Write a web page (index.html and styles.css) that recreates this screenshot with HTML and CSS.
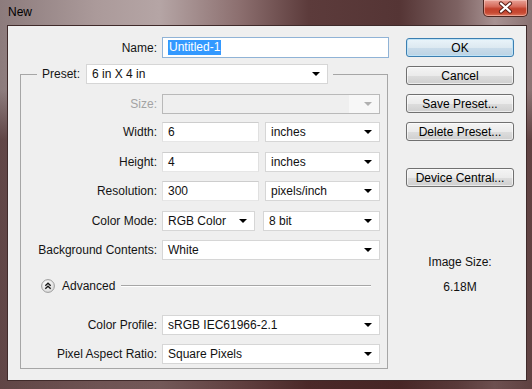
FILE: index.html
```html
<!DOCTYPE html>
<html lang="en">
<head>
  <meta charset="UTF-8" />
  <title>New</title>
  <link rel="stylesheet" href="styles.css">
</head>
<body>
  <div class="window">
    <div class="titlebar">
      <span class="title">New</span>
      <div class="close-btn">
        <svg width="45" height="17" viewBox="0 0 45 17">
          <path d="M18 4.5 L27 12.5 M27 4.5 L18 12.5" stroke="#5a1f16" stroke-width="4.2" stroke-linecap="round"/>
          <path d="M18 4.5 L27 12.5 M27 4.5 L18 12.5" stroke="#ffffff" stroke-width="2.2" stroke-linecap="round"/>
        </svg>
      </div>
    </div>

    <div class="client">
      <div class="main">
        <div class="name-row">
          <label class="lbl">Name:</label>
          <div class="textbox focused"><span class="selected">Untitled-1</span></div>
        </div>

        <fieldset class="group">
          <legend>
            <div class="legend-inner">
              <label class="lbl">Preset:</label>
              <div class="combo preset">6 in X 4 in</div>
            </div>
          </legend>

          <div class="form-grid">
            <label class="lbl disabled">Size:</label>
            <div class="combo disabled"></div>

            <label class="lbl">Width:</label>
            <div class="pair">
              <div class="textbox">6</div>
              <div class="combo">inches</div>
            </div>

            <label class="lbl">Height:</label>
            <div class="pair">
              <div class="textbox">4</div>
              <div class="combo">inches</div>
            </div>

            <label class="lbl">Resolution:</label>
            <div class="pair">
              <div class="textbox">300</div>
              <div class="combo">pixels/inch</div>
            </div>

            <label class="lbl">Color Mode:</label>
            <div class="pair mode">
              <div class="combo">RGB Color</div>
              <div class="combo">8 bit</div>
            </div>

            <label class="lbl">Background Contents:</label>
            <div class="combo">White</div>

            <div class="advanced">
              <svg class="adv-icon" width="14" height="14" viewBox="0 0 14 14">
                <defs>
                  <radialGradient id="advFill" cx="0.4" cy="0.35" r="0.7">
                    <stop offset="0" stop-color="#ffffff"/>
                    <stop offset="1" stop-color="#d8d8d8"/>
                  </radialGradient>
                </defs>
                <circle cx="7" cy="7" r="6.4" fill="url(#advFill)" stroke="#9c9c9c" stroke-width="1"/>
                <polyline points="4.3,6.8 7,4.3 9.7,6.8" fill="none" stroke="#1a1a1a" stroke-width="1.4"/>
                <polyline points="4.3,9.8 7,7.3 9.7,9.8" fill="none" stroke="#1a1a1a" stroke-width="1.4"/>
              </svg>
              <span>Advanced</span>
              <div class="adv-line"></div>
            </div>

            <label class="lbl">Color Profile:</label>
            <div class="combo">sRGB IEC61966-2.1</div>

            <label class="lbl">Pixel Aspect Ratio:</label>
            <div class="combo">Square Pixels</div>
          </div>
        </fieldset>
      </div>

      <div class="side">
        <button class="btn default">OK</button>
        <button class="btn">Cancel</button>
        <button class="btn">Save Preset...</button>
        <button class="btn">Delete Preset...</button>
        <button class="btn central">Device Central...</button>

        <div class="info-label">Image Size:</div>
        <div class="info-value">6.18M</div>
      </div>
    </div>
  </div>
</body>
</html>
```

FILE: styles.css
```css
* {
  box-sizing: border-box;
}

body {
  margin: 0;
  width: 532px;
  height: 389px;
  overflow: hidden;
  font-family: "Liberation Sans", Arial, sans-serif;
  font-size: 12px;
  color: #111;
  background:
    linear-gradient(180deg, rgba(0,0,0,0) 0px, rgba(0,0,0,0) 90px, rgba(60,25,25,0.55) 140px, rgba(60,25,25,0.55) 100%),
    linear-gradient(90deg, #8c7b7c 0%, #ab9a9a 18%, #b5a5a5 30%, #8c6f6f 45%, #5c3b3b 58%, #553535 75%, #7d6262 86%, #a89292 93%, #8a7272 100%);
}

.window {
  height: 389px;
  display: flex;
  flex-direction: column;
  padding: 0 5px 8px 7px;
}

/* title bar */
.titlebar {
  height: 25px;
  display: flex;
  align-items: flex-start;
}

.title {
  padding: 5px 0 0 1px;
  font-size: 12px;
  color: #000;
}

.close-btn {
  margin-left: auto;
  margin-right: -1px;
  width: 45px;
  height: 17px;
  border: 1px solid #4d2620;
  border-top: none;
  border-radius: 0 0 5px 5px;
  background: linear-gradient(180deg, #e9a398 0%, #d66c5c 40%, #c2412c 55%, #c84a33 80%, #e07a62 100%);
  box-shadow: inset 0 0 0 1px rgba(255, 220, 210, 0.45);
  overflow: hidden;
}

.close-btn svg {
  display: block;
  margin-top: -1px;
  margin-left: -1px;
}

/* client area */
.client {
  flex: 1;
  display: flex;
  gap: 17px;
  padding: 11px 11px 0 12px;
  background: #efefef;
  border: 1px solid #3f2a2a;
}

.main {
  width: 369px;
}

.lbl {
  text-align: right;
  white-space: nowrap;
  line-height: 20px;
  color: #141414;
}

.lbl.disabled {
  color: #a3a3a3;
}

.name-row {
  display: grid;
  grid-template-columns: 137px 1fr;
  column-gap: 5px;
  align-items: center;
  height: 21px;
}

.textbox,
.combo {
  height: 20px;
  line-height: 18px;
  padding: 0 5px;
  background: #fff;
  border: 1px solid;
  border-color: #cdcdcd #e0e0e0 #e6e6e6 #e0e0e0;
  white-space: nowrap;
  color: #111;
}

.textbox.focused {
  height: 21px;
  line-height: 19px;
  border-color: #90b3d6;
}

.selected {
  background: #3399ff;
  color: #fff;
  padding: 0 1px 1px 1px;
}

.combo {
  display: flex;
  align-items: center;
  border-color: #d6d6d6;
}

.combo::after {
  content: "";
  margin-left: auto;
  margin-right: 2px;
  border-top: 4px solid #000;
  border-left: 4px solid transparent;
  border-right: 4px solid transparent;
}

.combo.disabled {
  background: linear-gradient(90deg, #efefef 0, #efefef 86%, #f7f7f7 86%);
  border-color: #b9b9b9;
}

.combo.disabled::after {
  border-top-color: #b0b0b0;
}

/* preset group */
.group {
  margin: 6px 1px 0 0;
  padding: 10px 7px 4px 0;
  border: 1px solid #a6a6a6;
  min-width: 0;
}

.group legend {
  margin-left: 16px;
  padding: 0 5px 0 5px;
}

.legend-inner {
  display: flex;
  align-items: center;
  gap: 6px;
}

.combo.preset {
  width: 242px;
}

.form-grid {
  display: grid;
  grid-template-columns: 136px 1fr;
  grid-template-rows: 28px 30px 29px 30px 29px 36px 39px 29px 20px;
  column-gap: 5px;
  align-items: start;
}

.pair {
  display: grid;
  grid-template-columns: 97px 1fr;
  gap: 6px;
}

.pair.mode {
  grid-template-columns: 93px 1fr;
  gap: 8px;
}

.advanced {
  grid-column: 1 / -1;
  display: flex;
  align-items: center;
  height: 20px;
  padding-left: 20px;
  color: #141414;
}

.adv-icon {
  display: block;
  margin-right: 7px;
}

.adv-line {
  flex: 1;
  height: 2px;
  margin: 0 9px 0 6px;
  border-top: 1px solid #a6a6a6;
  border-bottom: 1px solid #ffffff;
}

/* buttons column */
.side {
  width: 108px;
  display: flex;
  flex-direction: column;
  align-items: stretch;
  padding-top: 1px;
}

.btn {
  height: 19px;
  margin-bottom: 9px;
  padding: 0;
  font-family: "Liberation Sans", Arial, sans-serif;
  font-size: 12px;
  color: #000;
  border: 1px solid #707070;
  border-radius: 3px;
  background: linear-gradient(180deg, #f4f4f4 0%, #ebebeb 50%, #dddddd 51%, #cfcfcf 100%);
  box-shadow: inset 0 0 0 1px rgba(255, 255, 255, 0.6);
}

.btn.default {
  border-color: #3c7fb1;
  background: linear-gradient(180deg, #eaf4fa 0%, #dde9f1 50%, #cadcea 51%, #bcd3e4 100%);
  box-shadow: inset 0 0 0 1px #bfe3f7;
}

.btn.central {
  margin-top: 18px;
}

.info-label {
  margin-top: 59px;
  text-align: center;
  line-height: 14px;
}

.info-value {
  margin-top: 11px;
  text-align: center;
  line-height: 14px;
}
```
